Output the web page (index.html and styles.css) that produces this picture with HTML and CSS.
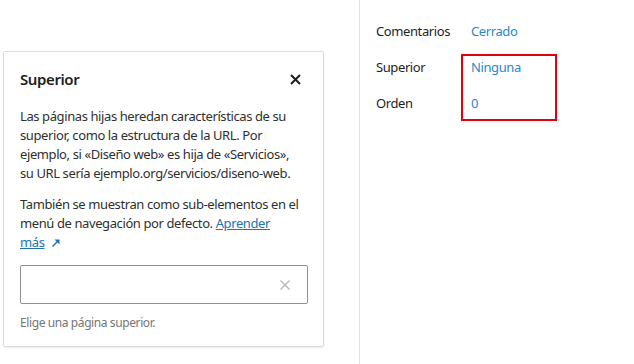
FILE: index.html
```html
<!DOCTYPE html>
<html lang="es">
<head>
<meta charset="utf-8">
<link rel="stylesheet" href="styles.css">
</head>
<body>
<div class="page">
  <div class="canvas">
    <div class="popover">
      <div class="pop-head">
        <h2 class="pop-title">Superior</h2>
        <button class="close" aria-label="Cerrar">
          <svg width="11" height="11" viewBox="0 0 11 11"><path d="M1 1L10 10M10 1L1 10" stroke="#1e1e1e" stroke-width="2"/></svg>
        </button>
      </div>
      <p class="desc">Las páginas hijas heredan características de su superior, como la estructura de la URL. Por ejemplo, si «Diseño web» es hija de «Servicios», su URL sería ejemplo.org/servicios/diseno-web.</p>
      <p class="desc">También se muestran como sub-elementos en el menú de navegación por defecto. <a href="#" class="link"><span class="link-text">Aprender</span> <span class="nowrap"><span class="link-text">más</span><svg class="ext" width="10" height="10" viewBox="0 0 10 10"><path d="M1.5 8.5L7.5 2.5" stroke="#2271b1" stroke-width="1.5"/><path d="M3.5 1.5H8.5V6.5Z" fill="#2271b1"/></svg></span></a></p>
      <div class="combo">
        <span class="clear">
          <svg width="10" height="10" viewBox="0 0 10 10"><path d="M0.5 0.5L9.5 9.5M9.5 0.5L0.5 9.5" stroke="#b4b4b4" stroke-width="1.3"/></svg>
        </span>
      </div>
      <p class="help">Elige una página superior.</p>
    </div>
  </div>
  <aside class="sidebar">
    <div class="row"><span class="label">Comentarios</span><a href="#" class="val">Cerrado</a></div>
    <div class="highlight">
      <div class="row"><span class="label">Superior</span><a href="#" class="val">Ninguna</a></div>
      <div class="row"><span class="label">Orden</span><a href="#" class="val">0</a></div>
    </div>
  </aside>
</div>
</body>
</html>
```

FILE: styles.css
```css
* { box-sizing: border-box; }
html, body { margin: 0; padding: 0; background: #fff; }
body {
  font-family: "Noto Sans", "Open Sans", sans-serif;
  font-size: 13px;
  letter-spacing: -0.4px;
  color: #1e1e1e;
  width: 634px;
  height: 364px;
  overflow: hidden;
}
.page {
  display: flex;
  height: 364px;
}
.canvas {
  width: 359px;
  padding: 51px 0 0 3px;
}
.popover {
  width: 321px;
  border: 1px solid #dcdcdc;
  border-radius: 2px;
  box-shadow: 0 1px 2px rgba(0,0,0,0.08);
  padding: 13px 20px 15px 16px;
  background: #fff;
}
.pop-head {
  display: flex;
  justify-content: space-between;
  align-items: center;
  height: 28px;
  margin-bottom: 14px;
}
.pop-title {
  margin: 0;
  font-size: 15px;
  font-weight: 600;
}
.close {
  border: 0;
  background: none;
  padding: 0;
  width: 11px;
  height: 11px;
  margin-right: 2px;
}
.close svg { display: block; }
.desc {
  margin: 0 0 12px;
  line-height: 19px;
  color: #2f2f2f;
}
.desc:last-of-type { margin-bottom: 0; }
.link { color: #2271b1; text-decoration: none; }
.link-text { text-decoration: underline; }
.nowrap { white-space: nowrap; }
.ext { margin-left: 7px; vertical-align: -1px; }
.combo {
  height: 39px;
  width: 288px;
  border: 1px solid #8c8f94;
  border-radius: 2px;
  display: flex;
  align-items: center;
  justify-content: flex-end;
  padding-right: 17px;
  margin-top: 13px;
}
.clear svg { display: block; }
.help {
  margin: 11px 0 0;
  font-size: 12px;
  line-height: 16px;
  color: #757575;
}
.sidebar {
  flex: 1;
  border-left: 1px solid #e0e0e0;
  padding: 22px 0 0 16px;
}
.row {
  display: flex;
  align-items: center;
  height: 18px;
  margin-bottom: 18px;
}
.label { width: 95px; }
.val { color: #2a87c6; text-decoration: none; }
.highlight {
  position: relative;
}
.highlight::after {
  content: "";
  position: absolute;
  left: 85px;
  top: -4px;
  width: 92px;
  height: 63px;
  border: 2px solid #e00010;
}
```
